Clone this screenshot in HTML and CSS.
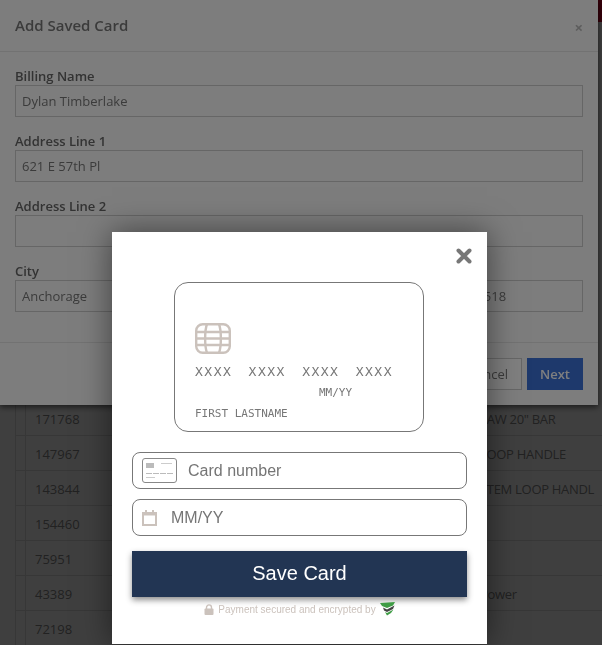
FILE: index.html
```html
<!DOCTYPE html>
<html lang="en">
<head>
  <meta charset="UTF-8" />
  <title>Add Saved Card</title>
  <link rel="stylesheet" href="styles.css">
</head>
<body>

  <div class="page">
    <div class="page-head"></div>
    <div class="page-tools"></div>
    <div class="row"><span></span><span>171768</span><span>SAW 20" BAR</span></div>
    <div class="row"><span></span><span>147967</span><span>LOOP HANDLE</span></div>
    <div class="row"><span></span><span>143844</span><span>STEM LOOP HANDL</span></div>
    <div class="row"><span></span><span>154460</span><span></span></div>
    <div class="row"><span></span><span>75951</span><span></span></div>
    <div class="row"><span></span><span>43389</span><span>Power</span></div>
    <div class="row"><span></span><span>72198</span><span></span></div>
  </div>

  <div class="backdrop"></div>

  <!-- Billing form, sits behind the card dialog -->
  <div class="modal">
    <div class="modal-head">
      <h2>Add Saved Card</h2>
      <span class="modal-close">×</span>
    </div>
    <div class="modal-body">
      <div class="field">
        <label>Billing Name</label>
        <input class="text-input" type="text" value="Dylan Timberlake">
      </div>
      <div class="field">
        <label>Address Line 1</label>
        <input class="text-input" type="text" value="621 E 57th Pl">
      </div>
      <div class="field">
        <label>Address Line 2</label>
        <input class="text-input" type="text">
      </div>
      <div class="field-row">
        <div class="field">
          <label>City</label>
          <input class="text-input" type="text" value="Anchorage">
        </div>
        <div class="field">
          <label>State</label>
          <input class="text-input" type="text" value="AK">
        </div>
        <div class="field">
          <label>Zip</label>
          <input class="text-input" type="text" value="99518">
        </div>
      </div>
    </div>
    <div class="modal-foot">
      <button class="btn btn-cancel">Cancel</button>
      <button class="btn btn-next">Next</button>
    </div>
  </div>

  <div class="backdrop"></div>

  <!-- Card entry dialog -->
  <div class="card-dialog">
    <div class="dialog-close">
      <svg width="16" height="16" viewBox="0 0 16 16">
        <path d="M2.5 2.5 L13.5 13.5 M13.5 2.5 L2.5 13.5" stroke="#777" stroke-width="4" stroke-linecap="round"/>
      </svg>
    </div>

    <div class="card-preview">
      <svg class="chip" width="36" height="31" viewBox="0 0 36 31" fill="none">
        <g stroke="#cbc2bc" stroke-width="2.4">
          <rect x="1.2" y="1.2" width="33.6" height="28.6" rx="6.5"/>
          <path d="M1 9 H35 M1 15.5 H35 M1 22 H35"/>
          <path d="M12 1 C9.5 8 9.5 23 12 30 M24 1 C26.5 8 26.5 23 24 30"/>
        </g>
      </svg>
      <div class="card-number">
        <span>XXXX</span><span>XXXX</span><span>XXXX</span><span>XXXX</span>
      </div>
      <div class="card-expiry">MM/YY</div>
      <div class="card-name">FIRST LASTNAME</div>
    </div>

    <div class="pay-input">
      <svg class="mini-card" width="35" height="25" viewBox="0 0 35 25" fill="none">
        <rect x="0.5" y="0.5" width="34" height="24" rx="2.5" stroke="#888"/>
        <rect x="4" y="5" width="8" height="5" fill="#bbb"/>
        <path d="M19 5.5 H30" stroke="#ccc"/>
        <path d="M4 15.5 H31" stroke="#bbb" stroke-dasharray="6 1"/>
        <path d="M4 19.5 H13" stroke="#ccc"/>
      </svg>
      <input type="text" placeholder="Card number">
    </div>

    <div class="pay-input pay-input-date">
      <svg width="15" height="16" viewBox="0 0 15 16" fill="none">
        <path d="M1 3 H14 V15 H1 Z" stroke="#cbc2bc" stroke-width="2"/>
        <path d="M1 4 H14" stroke="#cbc2bc" stroke-width="3"/>
        <path d="M4 0 V3 M11 0 V3" stroke="#cbc2bc" stroke-width="2"/>
      </svg>
      <input type="text" placeholder="MM/YY">
    </div>

    <button class="save-btn">Save Card</button>

    <div class="secure-note">
      <svg width="10" height="11" viewBox="0 0 10 11">
        <path d="M2.5 5 V3.4 a2.5 2.5 0 0 1 5 0 V5" fill="none" stroke="#cbc2bc" stroke-width="1.4"/>
        <rect x="0.5" y="4.6" width="9" height="6.4" rx="1" fill="#cbc2bc"/>
      </svg>
      <span>Payment secured and encrypted by</span>
      <svg width="15" height="14" viewBox="0 0 15 14">
        <path d="M0 1 L15 0 L13 3.5 L7 6 L2 4 Z" fill="#3f9c45"/>
        <path d="M3 5.5 L7 7.5 L14.5 3.5 L13 7 L7 10 L4 8.5 Z" fill="#444"/>
        <path d="M5 10 L7 11 L13.5 7.5 L11 11 L7 13.5 Z" fill="#3f9c45"/>
      </svg>
    </div>
  </div>

</body>
</html>
```
FILE: styles.css
```css
/* Reset and Base */
* {
  box-sizing: border-box;
  margin: 0;
  padding: 0;
}

html, body {
  height: 100%;
  overflow: hidden;
}

body {
  font-family: 'Open Sans', sans-serif;
  background: #fff;
  color: #888;
  font-size: 13px;
}

/* Page behind the modals */
.page-head {
  height: 22px;
  background: #d80028;
}

.page-tools {
  height: 379px;
}

.row {
  display: grid;
  grid-template-columns: 11px 454px 1fr;
  height: 35px;
  margin-left: 15px;
  border-bottom: 1px solid #ddd;
  line-height: 36px;
  white-space: nowrap;
  overflow: hidden;
}

.row span:nth-child(1) {
  border-left: 1px solid #ddd;
  border-right: 1px solid #ddd;
}

.row span:nth-child(2) {
  padding-left: 9px;
}

.row span:nth-child(3) {
  letter-spacing: -0.3px;
}

.backdrop {
  position: fixed;
  top: 0;
  left: 0;
  width: 100%;
  height: 100%;
  background: rgba(0, 0, 0, 0.5);
}

/* Billing modal */
.modal {
  position: absolute;
  top: 0;
  left: 0;
  width: 598px;
  height: 405px;
  display: flex;
  flex-direction: column;
  background: #fbfbfb;
  box-shadow: 0 2px 6px rgba(0, 0, 0, 0.6);
}

.modal-head {
  height: 52px;
  display: flex;
  align-items: center;
  justify-content: space-between;
  padding: 0 15px 2px;
  border-bottom: 1px solid #e5e5e5;
}

.modal-head h2 {
  font-size: 15px;
  font-weight: 600;
  color: #777;
}

.modal-close {
  font-size: 15px;
  font-weight: 700;
  color: #bbb;
  margin-top: 4px;
}

.modal-body {
  flex: 1;
  padding: 14px 15px 0;
  display: flex;
  flex-direction: column;
  gap: 14px;
}

.field label {
  display: block;
  height: 19px;
  line-height: 21px;
  font-size: 13px;
  font-weight: 600;
  color: #666;
}

.field-row {
  display: grid;
  grid-template-columns: 215px 232px 121px;
  gap: 0;
}

.text-input {
  display: block;
  width: 100%;
  height: 32px;
  padding: 0 6px;
  border: 1px solid #ccc;
  background: transparent;
  font-family: 'Open Sans', sans-serif;
  font-size: 13px;
  color: #777;
}

.modal-foot {
  height: 63px;
  display: flex;
  align-items: center;
  justify-content: flex-end;
  gap: 5px;
  padding: 0 15px;
  border-top: 1px solid #e5e5e5;
}

.btn {
  height: 32px;
  padding: 0 13px;
  font-family: 'Open Sans', sans-serif;
  font-size: 13px;
}

.btn-cancel {
  background: #fff;
  border: 1px solid #ccc;
  color: #777;
}

.btn-next {
  width: 56px;
  background: #3d73d9;
  border: none;
  color: #fff;
  font-weight: 600;
}

/* Card dialog */
.card-dialog {
  position: absolute;
  top: 232px;
  left: 112px;
  width: 375px;
  height: 412px;
  padding: 16px 20px 0;
  display: flex;
  flex-direction: column;
  background: #fff;
  box-shadow: 0 0 30px rgba(0, 0, 0, 0.5);
}

.dialog-close {
  height: 34px;
  display: flex;
  justify-content: flex-end;
  margin-right: -5px;
}

.card-preview {
  width: 250px;
  height: 150px;
  margin-left: 42px;
  padding: 40px 20px 0;
  border: 1px solid #777;
  border-radius: 14px;
  font-family: 'DejaVu Sans Mono', monospace;
  color: #777;
}

.chip {
  display: block;
}

.card-number {
  display: flex;
  justify-content: space-between;
  width: 198px;
  margin-top: 10px;
  font-size: 13px;
  line-height: 16px;
  letter-spacing: 1.5px;
}

.card-expiry {
  margin: 6px 0 0 124px;
  font-size: 11px;
  line-height: 14px;
}

.card-name {
  margin-top: 7px;
  font-size: 11px;
  line-height: 14px;
}

.pay-input {
  height: 37px;
  margin-top: 20px;
  padding-left: 9px;
  display: flex;
  align-items: center;
  gap: 11px;
  border: 1px solid #777;
  border-radius: 8px;
}

.pay-input input {
  flex: 1;
  min-width: 0;
  border: none;
  outline: none;
  font-family: 'Liberation Sans', sans-serif;
  font-size: 16px;
  color: #777;
}

.pay-input-date {
  margin-top: 10px;
  gap: 14px;
}

.save-btn {
  height: 46px;
  margin-top: 15px;
  padding-bottom: 2px;
  background: #223553;
  border: none;
  color: #fff;
  font-family: 'Liberation Sans', sans-serif;
  font-size: 20px;
  box-shadow: 0 3px 6px rgba(0, 0, 0, 0.45);
}

.secure-note {
  margin-top: 5px;
  display: flex;
  align-items: center;
  justify-content: center;
  gap: 4px;
  font-family: 'Liberation Sans', sans-serif;
  font-size: 10px;
  color: #cbc2bc;
}
```
